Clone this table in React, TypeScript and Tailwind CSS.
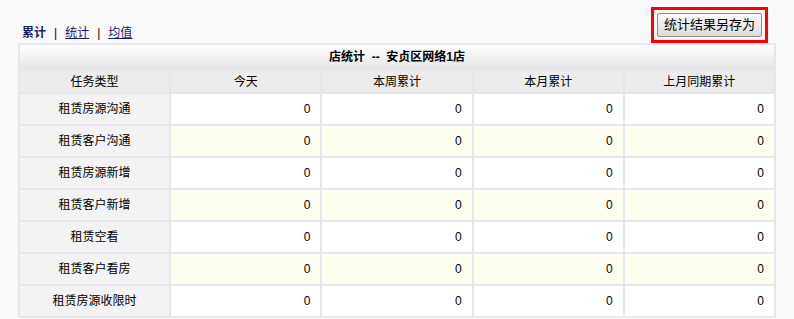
import React from 'react';

const columns = ['今天', '本周累计', '本月累计', '上月同期累计'];

const rows = [
    '租赁房源沟通',
    '租赁客户沟通',
    '租赁房源新增',
    '租赁客户新增',
    '租赁空看',
    '租赁客户看房',
    '租赁房源收限时',
];

const font = { fontFamily: '"Liberation Sans", "Noto Sans CJK SC", sans-serif' };

const App: React.FC = () => {
    return (
        <div className="min-h-screen w-full bg-[#f9f9f9] px-[18px] text-[12px] text-black" style={font}>
            {/* top bar: tabs + export button */}
            <div className="flex h-[43px] items-end justify-between">
                <div className="mb-[3px] ml-[4px] flex items-center gap-[8px] text-[12px] leading-[14px] text-[#1b1b6b]">
                    <span className="font-bold">累计</span>
                    <span className="text-black">|</span>
                    <a href="#" className="underline">统计</a>
                    <span className="text-black">|</span>
                    <a href="#" className="underline">均值</a>
                </div>
                <div className="mr-[8px] border-[3px] border-[#ff0000] p-[3px]">
                    <button className="h-[24px] rounded-[2px] border border-[#8a8a8a] bg-gradient-to-b from-[#fbfbfb] to-[#dcdcdc] px-[6px] text-[13px] leading-[20px] text-black">
                        统计结果另存为
                    </button>
                </div>
            </div>

            <table className="w-full table-fixed border-separate border-spacing-[2px] bg-[#e6e6ec]">
                <thead>
                    <tr>
                        <th
                            colSpan={5}
                            className="h-[24px] bg-gradient-to-b from-[#ffffff] to-[#e6e6e6] text-center text-[12px] font-bold"
                        >
                            店统计&nbsp; --&nbsp; 安贞区网络1店
                        </th>
                    </tr>
                    <tr>
                        <th className="h-[21px] bg-[#ececec] text-center font-normal">任务类型</th>
                        {columns.map((c) => (
                            <th key={c} className="h-[21px] bg-[#ececec] text-center font-normal">
                                {c}
                            </th>
                        ))}
                    </tr>
                </thead>
                <tbody>
                    {rows.map((r, i) => (
                        <tr key={r}>
                            <td className="h-[30px] bg-[#f3f3f3] text-center">{r}</td>
                            {columns.map((c) => (
                                <td
                                    key={c}
                                    className={`h-[30px] pr-[10px] text-right ${i % 2 === 1 ? 'bg-[#fefef0]' : 'bg-white'}`}
                                >
                                    0
                                </td>
                            ))}
                        </tr>
                    ))}
                </tbody>
            </table>
        </div>
    );
};

export default App;
